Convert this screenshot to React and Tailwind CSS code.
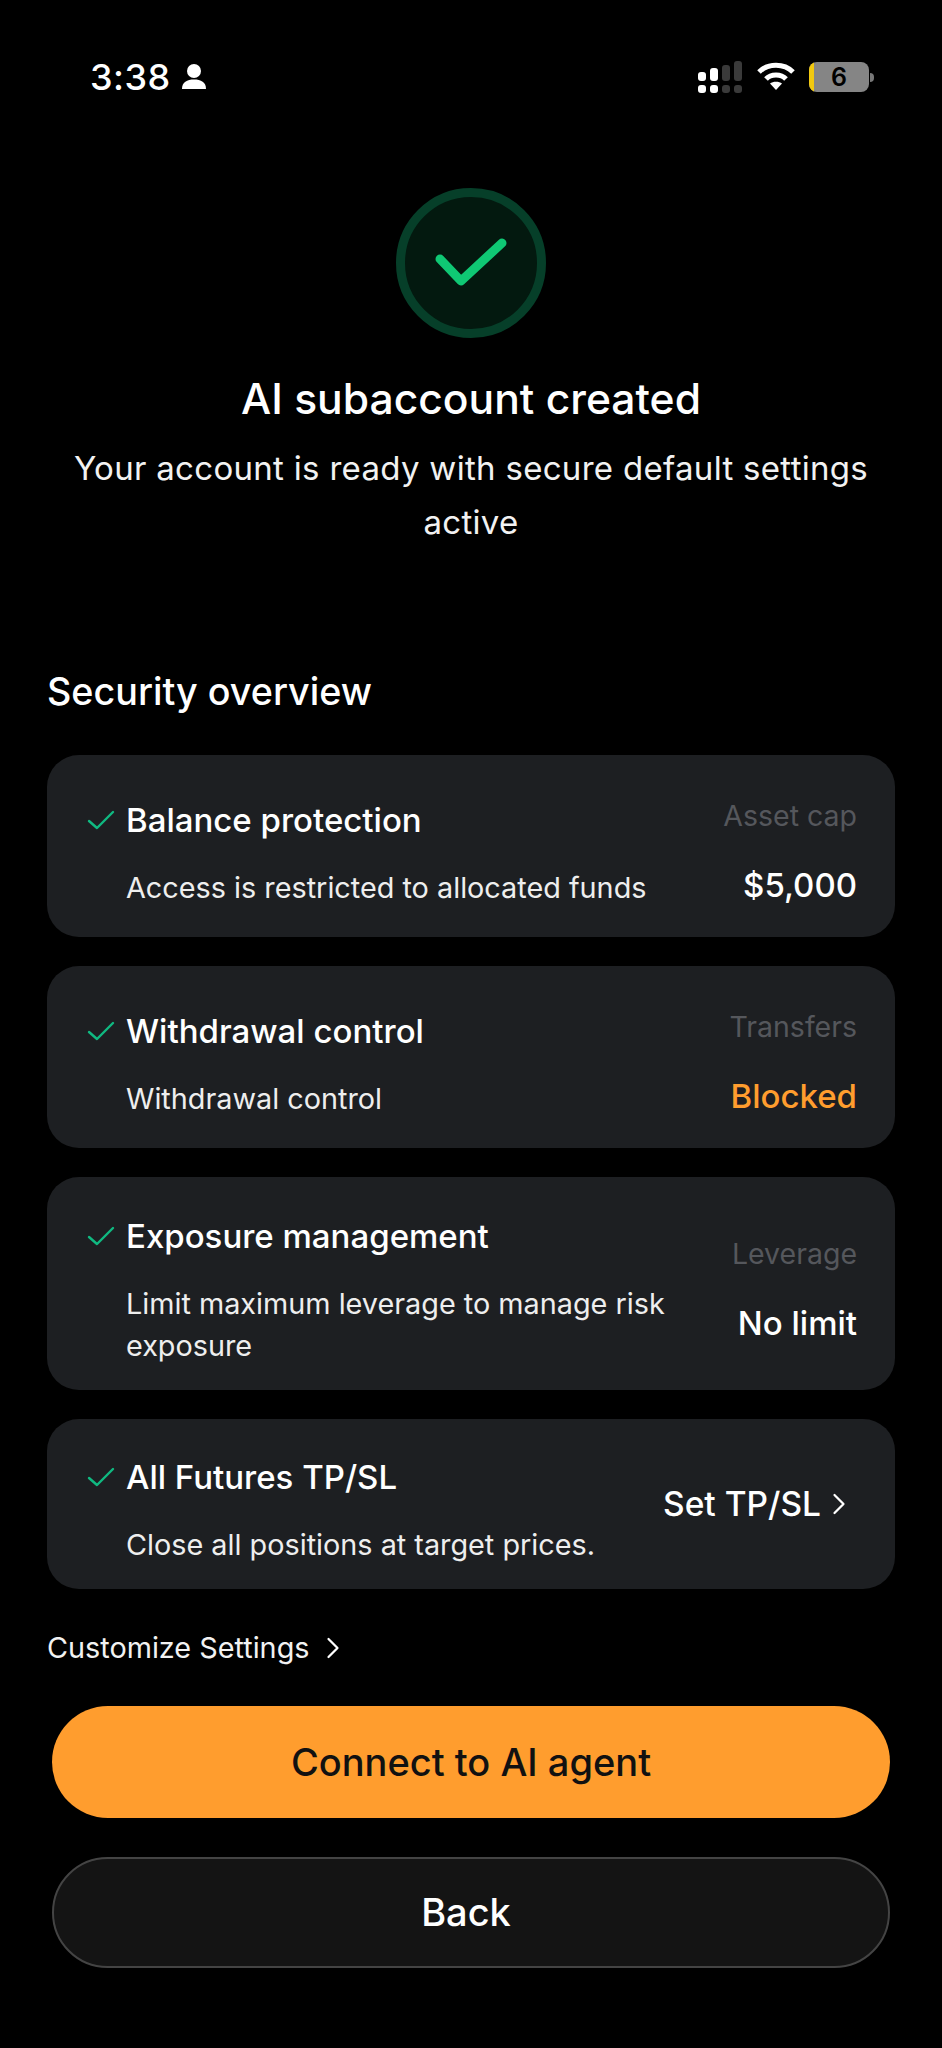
import { ChevronRight } from "lucide-react";

function SmallCheck() {
  return (
    <svg width="28" height="22" viewBox="0 0 28 22" fill="none" className="shrink-0">
      <path d="M2 12L10 19L26 3" stroke="#10b981" strokeWidth="2.4" strokeLinecap="round" strokeLinejoin="round" />
    </svg>
  );
}

function StatusBar() {
  return (
    <div className="flex justify-between items-center h-[46px] mt-[54px] pl-[90px] pr-[68px]">
      <div className="flex items-center gap-[10px]">
        <span className="text-[36px] font-medium text-white leading-none tracking-[0.5px]">3:38</span>
        <svg width="26" height="28" viewBox="0 0 26 28" fill="#fff">
          <circle cx="13" cy="8" r="7" />
          <path d="M1 26C1 19 6 16.500 13 16.500C20 16.500 25 19 25 26Z" />
        </svg>
      </div>
      <div className="flex items-center gap-[14px]">
        <svg width="46" height="32" viewBox="0 0 46 32">
          <rect x="1" y="11" width="8" height="9" rx="3" fill="#fff" />
          <rect x="13" y="7" width="8" height="13" rx="3" fill="#fff" />
          <rect x="25" y="4" width="8" height="16" rx="3" fill="#3a3a3a" />
          <rect x="37" y="0" width="8" height="20" rx="3" fill="#3a3a3a" />
          <rect x="1" y="24" width="8" height="8" rx="3" fill="#fff" />
          <rect x="13" y="24" width="8" height="8" rx="3" fill="#fff" />
          <rect x="25" y="24" width="8" height="8" rx="3" fill="#3a3a3a" />
          <rect x="37" y="24" width="8" height="8" rx="3" fill="#3a3a3a" />
        </svg>
        <svg width="38" height="30" viewBox="0 0 38 30" fill="none" stroke="#fff" strokeWidth="5">
          <path d="M2 10C11 1 27 1 36 10" />
          <path d="M9 17C14 11.500 24 11.500 29 17" />
          <path d="M19 28L13 21.500C16 19 22 19 25 21.500Z" fill="#fff" stroke="none" />
        </svg>
        <div className="flex items-center gap-[1px]">
          <div className="relative flex items-center justify-center w-[60px] h-[30px] rounded-[8px] bg-[#858585] overflow-hidden">
            <div className="absolute left-0 top-0 bottom-0 w-[5px] bg-[#f2c90f]" />
            <span className="text-[25px] font-semibold text-black leading-none">6</span>
          </div>
          <div className="w-[4px] h-[9px] rounded-r-full bg-[#777]" />
        </div>
      </div>
    </div>
  );
}

function Card({ title, desc, label, value, valueClass = "text-white", className = "" }) {
  return (
    <div className={`flex justify-between items-center rounded-[32px] bg-[#1d1f22] pl-[40px] pr-[38px] ${className}`}>
      <div className="flex flex-col gap-[26px] pt-[15px]">
        <div className="flex items-center gap-[11px]">
          <SmallCheck />
          <span className="text-[33px] leading-[42px] font-medium text-white">{title}</span>
        </div>
        <p className="pl-[39px] text-[28.800px] leading-[42px] text-[#eeeeee] max-w-[610px]">{desc}</p>
      </div>
      <div className="flex flex-col items-end gap-[30px] shrink-0 pt-[12px]">
        <span className="text-[28.500px] leading-[36px] text-[#55575c]">{label}</span>
        <span className={`text-[33px] leading-[42px] font-medium ${valueClass}`}>{value}</span>
      </div>
    </div>
  );
}

export default function App() {
  return (
    <div className="w-[942px] h-[2048px] bg-black overflow-hidden font-['Inter',sans-serif]">
      <StatusBar />

      <div className="flex flex-col items-center mt-[88px]">
        <div className="flex items-center justify-center w-[150px] h-[150px] rounded-full border-[9px] border-[#063f29] bg-[#03190f]">
          <svg width="72" height="50" viewBox="0 0 72 50" fill="none">
            <path d="M5 21L26 43L67 5" stroke="#0fc874" strokeWidth="9" strokeLinecap="round" strokeLinejoin="round" />
          </svg>
        </div>
        <h1 className="mt-[33px] text-[42.600px] leading-[56px] font-medium text-white">AI subaccount created</h1>
        <p className="mt-[14px] w-[830px] text-center text-[33px] leading-[54px] text-[#f2f2f2] tracking-[0.3px]">
          Your account is ready with secure default settings active
        </p>
      </div>

      <h2 className="mt-[118px] pl-[47px] text-[37.700px] leading-[48px] font-medium text-white">Security overview</h2>

      <div className="flex flex-col gap-[29px] mt-[40px] mx-[47px]">
        <Card
          className="h-[182px]"
          title="Balance protection"
          desc="Access is restricted to allocated funds"
          label="Asset cap"
          value="$5,000"
        />
        <Card
          className="h-[182px]"
          title="Withdrawal control"
          desc="Withdrawal control"
          label="Transfers"
          value="Blocked"
          valueClass="text-[#ff9d2e]"
        />
        <Card
          className="h-[213px]"
          title="Exposure management"
          desc="Limit maximum leverage to manage risk exposure"
          label="Leverage"
          value="No limit"
        />
        <div className="flex justify-between items-center h-[170px] rounded-[32px] bg-[#1d1f22] pl-[40px] pr-[38px]">
          <div className="flex flex-col gap-[26px] pt-[14px]">
            <div className="flex items-center gap-[11px]">
              <SmallCheck />
              <span className="text-[33px] leading-[42px] font-medium text-white">All Futures TP/SL</span>
            </div>
            <p className="pl-[39px] text-[28.800px] leading-[42px] text-[#eeeeee]">Close all positions at target prices.</p>
          </div>
          <div className="flex items-center">
            <span className="text-[33.500px] leading-[42px] font-medium text-white">Set TP/SL</span>
            <ChevronRight size={36} strokeWidth={1.5} color="#fff" />
          </div>
        </div>
      </div>

      <div className="flex items-center gap-[5px] mt-[40px] pl-[47px]">
        <span className="text-[28.800px] leading-[38px] text-[#f2f2f2]">Customize Settings</span>
        <ChevronRight size={36} strokeWidth={1.5} color="#fff" />
      </div>

      <div className="flex flex-col gap-[39px] mt-[39px] mx-[52px]">
        <button className="h-[112px] rounded-full bg-[#ff9d2e] text-[38px] font-medium text-[#111]">Connect to AI agent</button>
        <button className="h-[111px] rounded-full bg-[#141414] border-2 border-[#444] pr-[10px] text-[38px] font-medium text-white">Back</button>
      </div>
    </div>
  );
}
